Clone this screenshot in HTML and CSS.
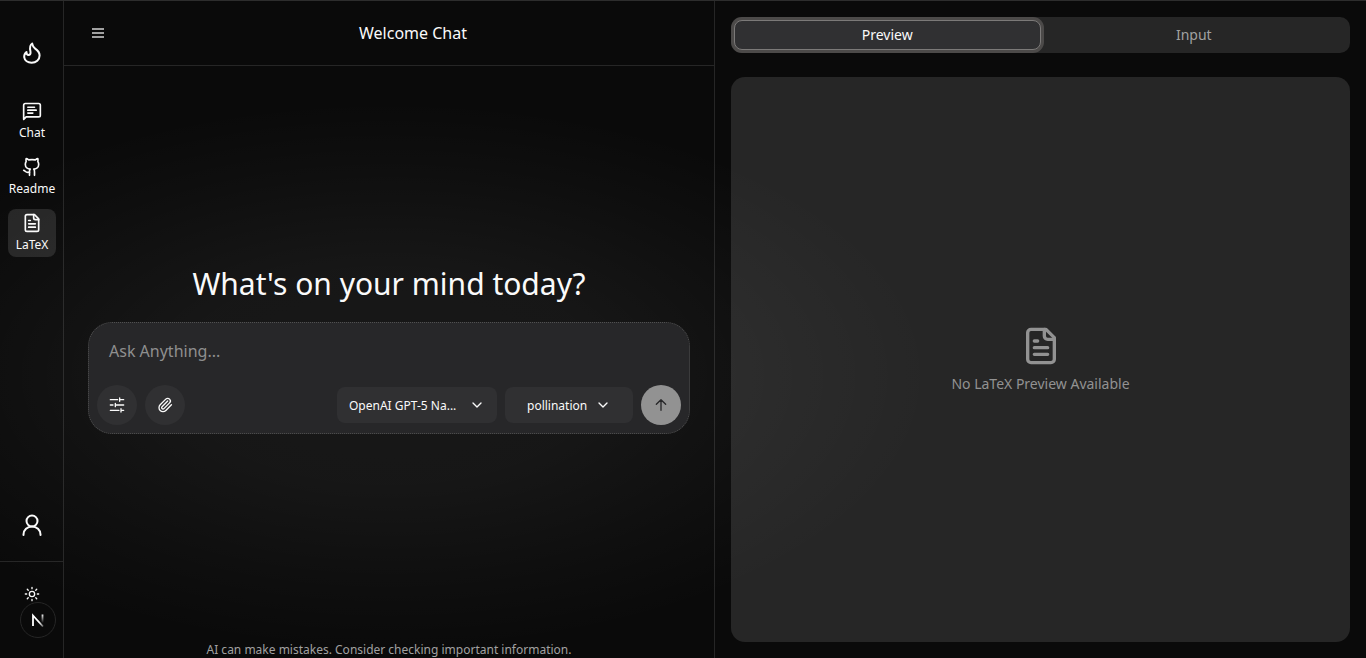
FILE: index.html
```html
<!DOCTYPE html>
<html lang="en">
<head>
<meta charset="utf-8">
<meta name="viewport" content="width=device-width, initial-scale=1">
<title>Welcome Chat</title>
<link rel="stylesheet" href="styles.css">
</head>
<body>
<div class="app">
  <aside class="sidebar">
    <a class="brand" href="#" aria-label="Home">
      <svg class="icon icon-lg" viewBox="0 0 24 24"><path d="M12.200 2.500c-3.200 2-2.300 5.600-1.700 8.300.4 2-.6 3.200-1.900 3.200-1.500 0-2.200-1.200-2.100-3-1.600 1.400-2.500 3.200-2.300 5.200.4 3.400 3.600 5.500 7.400 5.500 4.500 0 8-2.900 8-7.200 0-3.700-2.400-5.500-4.400-6.900-1.700-1.300-2.700-2.700-3-5.100z"/></svg>
    </a>
    <nav class="nav">
      <a class="nav-item" href="#">
        <svg class="icon icon-md" viewBox="0 0 24 24"><path d="M2 22V5a2 2 0 0 1 2-2h16a2 2 0 0 1 2 2v12a2 2 0 0 1-2 2H5z"/><path d="M7 7.500h8M7 11h10M7 14.500h6"/></svg>
        <span>Chat</span>
      </a>
      <a class="nav-item" href="#">
        <svg class="icon icon-md" viewBox="0 0 24 24"><path d="M15 22v-4a4.800 4.800 0 0 0-1-3.500c3 0 6-2 6-5.500.08-1.250-.27-2.480-1-3.500.28-1.150.28-2.350 0-3.500 0 0-1 0-3 1.500-2.640-.5-5.360-.5-8 0C6 2 5 2 5 2c-.3 1.150-.3 2.350 0 3.500A5.400 5.400 0 0 0 4 9c0 3.500 3 5.500 6 5.500-.39.490-.68 1.050-.85 1.650S8.930 17.380 9 18v4"/><path d="M9 18c-4.510 2-5-2-7-2"/></svg>
        <span>Readme</span>
      </a>
      <a class="nav-item nav-item-active" href="#" aria-current="page">
        <svg class="icon icon-md" viewBox="0 0 24 24"><path d="M15 2H6a2 2 0 0 0-2 2v16a2 2 0 0 0 2 2h12a2 2 0 0 0 2-2V7z"/><path d="M14 2v4a2 2 0 0 0 2 2h4M10 9H8M16 13H8M16 17H8"/></svg>
        <span>LaTeX</span>
      </a>
    </nav>
    <button class="account" type="button" aria-label="Account">
      <svg class="icon icon-lg" viewBox="0 0 24 24"><circle cx="12" cy="8" r="5.500"/><path d="M3.500 22v-.5a8.500 8 0 0 1 17 0v.5"/></svg>
    </button>
    <div class="sidebar-foot">
      <button class="theme" type="button" aria-label="Toggle theme">
        <svg class="icon icon-sm" viewBox="0 0 24 24"><circle cx="12" cy="12" r="4"/><path d="M12 2v2M12 20v2M4.930 4.930l1.410 1.410M17.660 17.660l1.410 1.410M2 12h2M20 12h2M6.340 17.660l-1.410 1.410M19.070 4.930l-1.410 1.410"/></svg>
      </button>
    </div>
  </aside>

  <main class="chat">
    <header class="chat-head">
      <button class="menu" type="button" aria-label="Menu">
        <svg class="menu-icon" viewBox="0 0 12 10"><path d="M0 1h12M0 5h12M0 9h12"/></svg>
      </button>
      <h1 class="chat-title">Welcome Chat</h1>
    </header>
    <section class="welcome">
      <h2 class="welcome-title">What's on your mind today?</h2>
      <form class="composer">
        <textarea class="prompt" rows="1" placeholder="Ask Anything..." aria-label="Message"></textarea>
        <div class="tools">
          <button class="round" type="button" aria-label="Settings">
            <svg class="icon icon-sm" viewBox="0 0 24 24"><path d="M2 4h11M17 4h5M16 1.500v5M2 12h4M11 12h11M9.500 9.500v5M2 20h13M19 20h3M18 17.500v5"/></svg>
          </button>
          <button class="round" type="button" aria-label="Attach file">
            <svg class="icon icon-sm" viewBox="0 0 24 24"><path d="m16 6-8.414 8.586a2 2 0 0 0 2.829 2.829l8.414-8.586a4 4 0 1 0-5.657-5.657l-8.379 8.551a6 6 0 1 0 8.485 8.485l8.379-8.551"/></svg>
          </button>
          <div class="picker picker-model">
            <select class="picker-select" aria-label="Model"><option>OpenAI GPT-5 Na...</option></select>
            <svg class="icon icon-sm picker-arrow" viewBox="0 0 24 24"><path d="m6 9 6 6 6-6"/></svg>
          </div>
          <div class="picker picker-provider">
            <select class="picker-select" aria-label="Provider"><option>pollination</option></select>
            <svg class="icon icon-sm picker-arrow" viewBox="0 0 24 24"><path d="m6 9 6 6 6-6"/></svg>
          </div>
          <button class="round send" type="submit" aria-label="Send">
            <svg class="icon icon-sm" viewBox="0 0 24 24"><path d="m5 11 7-7 7 7M12 4v16"/></svg>
          </button>
        </div>
      </form>
    </section>
    <p class="notice">AI can make mistakes. Consider checking important information.</p>
  </main>

  <section class="output">
    <div class="tabs" role="tablist">
      <button class="tab tab-active" type="button" role="tab" aria-selected="true">Preview</button>
      <button class="tab" type="button" role="tab" aria-selected="false">Input</button>
    </div>
    <div class="preview" role="tabpanel">
      <svg class="icon icon-xl" viewBox="0 0 24 24"><path d="M15 2H6a2 2 0 0 0-2 2v16a2 2 0 0 0 2 2h12a2 2 0 0 0 2-2V7z"/><path d="M14 2v4a2 2 0 0 0 2 2h4M10 9H8M16 13H8M16 17H8"/></svg>
      <p class="preview-text">No LaTeX Preview Available</p>
    </div>
  </section>

  <div class="glow"></div>
  <button class="dev-badge" type="button" aria-label="Developer tools">
    <svg class="dev-mark" viewBox="0 0 14 14">
      <defs>
        <linearGradient id="fade-a" gradientUnits="userSpaceOnUse" x1="6" y1="6" x2="12" y2="14"><stop offset="0.4" stop-color="#fff"/><stop offset="1" stop-color="#fff" stop-opacity="0.3"/></linearGradient>
        <linearGradient id="fade-b" gradientUnits="userSpaceOnUse" x1="0" y1="1" x2="0" y2="10"><stop offset="0" stop-color="#fff"/><stop offset="1" stop-color="#fff" stop-opacity="0"/></linearGradient>
      </defs>
      <path d="M2 13V2.500L12 13.500" fill="none" stroke="url(#fade-a)" stroke-width="1.800"/>
      <path d="M11.500 1.500v8.500" fill="none" stroke="url(#fade-b)" stroke-width="1.800"/>
    </svg>
  </button>
</div>
</body>
</html>
```

FILE: styles.css
```css
* {
  box-sizing: border-box;
}

body {
  margin: 0;
  background: #0a0a0a;
  color: #fafafa;
  font-family: "Noto Sans", sans-serif;
  font-size: 16px;
}

button,
select,
textarea {
  margin: 0;
  padding: 0;
  border: 0;
  background: none;
  color: inherit;
  font: inherit;
}

h1,
h2,
p {
  margin: 0;
  font-weight: 400;
}

a {
  color: inherit;
  text-decoration: none;
}

.app {
  position: relative;
  display: grid;
  grid-template-columns: 64px minmax(0, 1fr) minmax(0, 1fr);
  height: 100vh;
  overflow: hidden;
  border-top: 1px solid #2d2d2d;
}

.icon {
  display: block;
  flex: none;
  fill: none;
  stroke: currentColor;
  stroke-width: 2;
  stroke-linecap: round;
  stroke-linejoin: round;
}

.icon-sm { width: 16px; height: 16px; }
.icon-md { width: 20px; height: 20px; }
.icon-lg { width: 24px; height: 24px; }
.icon-xl { width: 40px; height: 40px; }

.sidebar {
  display: flex;
  flex-direction: column;
  border-right: 1px solid #262626;
}

.brand {
  display: flex;
  justify-content: center;
  padding: 40px 0 32px;
}

.nav {
  display: flex;
  flex-direction: column;
  gap: 8px;
  flex: 1;
  padding: 0 7px 0 8px;
}

.nav-item {
  display: flex;
  flex-direction: column;
  align-items: center;
  gap: 4px;
  height: 48px;
  padding-top: 4px;
  border-radius: 8px;
  font-size: 12px;
  line-height: 16px;
}

.nav-item-active {
  background: #262626;
}

.account {
  display: flex;
  justify-content: center;
  padding-bottom: 24px;
}

.sidebar-foot {
  display: flex;
  justify-content: center;
  align-items: flex-start;
  height: 97px;
  padding-top: 24px;
  border-top: 1px solid #262626;
}

.chat {
  display: flex;
  flex-direction: column;
  border-right: 1px solid #262626;
}

.chat-head {
  display: flex;
  align-items: center;
  height: 65px;
  padding-left: 20px;
  border-bottom: 1px solid #262626;
}

.menu {
  display: flex;
  align-items: center;
  justify-content: center;
  width: 28px;
  height: 28px;
}

.menu-icon {
  width: 12px;
  height: 10px;
  stroke: #a1a1a1;
  stroke-width: 2;
}

.chat-title {
  flex: 1;
  font-size: 16px;
  line-height: 24px;
  text-align: center;
}

.welcome {
  display: flex;
  flex-direction: column;
  justify-content: center;
  gap: 20px;
  flex: 1;
  padding: 0 24px;
}

.welcome-title {
  font-size: 30px;
  line-height: 36px;
  text-align: center;
}

.composer {
  position: relative;
  z-index: 1;
  padding: 8px;
  border: 1px dotted #505050;
  border-radius: 24px;
  background: #272729;
}

.prompt {
  display: block;
  width: 100%;
  height: 54px;
  padding: 8px 12px;
  line-height: 24px;
  resize: none;
  outline: none;
}

.prompt::placeholder {
  color: #8f8f8f;
}

.tools {
  display: flex;
  align-items: center;
  gap: 8px;
}

.round {
  display: flex;
  align-items: center;
  justify-content: center;
  width: 40px;
  height: 40px;
  border-radius: 50%;
  background: #303032;
}

.send {
  background: #929292;
  color: #272729;
}

.picker {
  display: grid;
  grid-template-columns: 1fr 16px;
  align-items: center;
  height: 36px;
  border-radius: 8px;
  background: #303032;
}

.picker-model {
  width: 160px;
  margin-left: auto;
  padding-right: 12px;
}

.picker-provider {
  width: 128px;
  padding-right: 22px;
}

.picker-select {
  grid-area: 1 / 1 / 2 / 3;
  width: 100%;
  height: 36px;
  padding-left: 12px;
  font-size: 12px;
  appearance: none;
  outline: none;
}

.picker-provider .picker-select {
  padding-left: 22px;
}

.picker-arrow {
  grid-area: 1 / 2;
  pointer-events: none;
}

.notice {
  padding-top: 8px;
  color: #a1a1a1;
  font-size: 12px;
  line-height: 16px;
  text-align: center;
}

.output {
  display: flex;
  flex-direction: column;
  gap: 24px;
  padding: 16px;
}

.tabs {
  display: grid;
  grid-template-columns: 1fr 1fr;
  height: 36px;
  padding: 3px;
  border-radius: 10px;
  background: #262626;
}

.tab {
  border: 1px solid transparent;
  border-radius: 8px;
  color: #a1a1a1;
  font-size: 14px;
  line-height: 20px;
}

.tab-active {
  border-color: #7b7978;
  background: #303032;
  color: #fafafa;
  box-shadow: 0 0 0 3px #4c4a49;
}

.preview {
  display: flex;
  flex-direction: column;
  align-items: center;
  justify-content: center;
  gap: 8px;
  flex: 1;
  border-radius: 14px;
  background: #262626;
  color: #929292;
}

.preview-text {
  font-size: 14px;
  line-height: 20px;
}

/* soft light centred behind the composer, spilling over both neighbours */
.glow {
  position: absolute;
  inset: 0;
  background: radial-gradient(ellipse 40% 42% at 28.5% 57%, rgba(255, 255, 255, 0.06), rgba(255, 255, 255, 0.05) 40%, rgba(255, 255, 255, 0.02) 75%, transparent);
  pointer-events: none;
}

.dev-badge {
  position: absolute;
  z-index: 2;
  left: 20px;
  bottom: 20px;
  display: flex;
  align-items: center;
  justify-content: center;
  width: 36px;
  height: 36px;
  border: 1px solid #262626;
  border-radius: 50%;
  background: #0a0a0a;
}

.dev-mark {
  width: 14px;
  height: 14px;
}
```
